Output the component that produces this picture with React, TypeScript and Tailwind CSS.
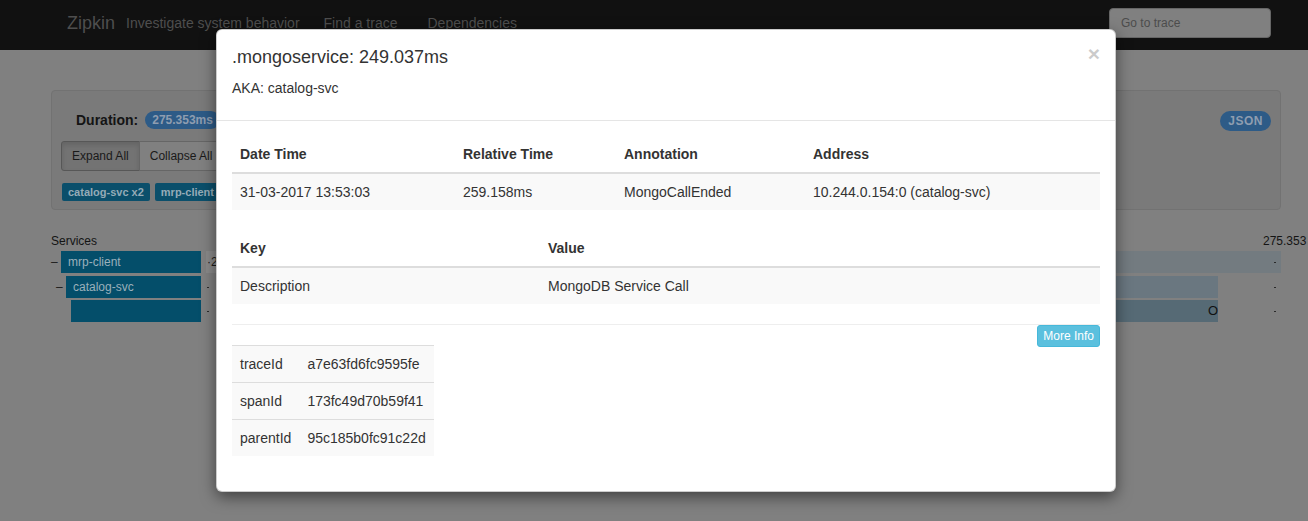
import React from "react";

const font = "font-['Liberation_Sans','Helvetica_Neue',Arial,sans-serif]";

function Dot() {
  return <span className="block w-[2px] h-[1px] bg-[#2a2a2a]" />;
}

function ServiceRow({
  level,
  dash,
  label,
  children,
}: {
  level: number;
  dash: boolean;
  label?: string;
  children: React.ReactNode;
}) {
  const pad = level === 0 ? "pl-0" : level === 1 ? "pl-[5px]" : "pl-[10px]";
  return (
    <div className="flex h-[22px] items-stretch">
      <div className={`flex w-[150px] shrink-0 items-stretch ${pad}`}>
        <span className="w-[10px] text-[12px] leading-[22px] text-[#1a1a1a]">{dash ? "–" : ""}</span>
        <div className="flex-1 bg-[#044e6a] pl-[7px] text-[12px] leading-[22px] text-[#9ab0bb]">{label}</div>
      </div>
      <div className="relative ml-[5px] w-[1075px] shrink-0">{children}</div>
    </div>
  );
}

export default function App() {
  return (
    <div className={`relative h-[521px] w-[1308px] overflow-hidden bg-[#808080] ${font}`}>
      {/* navbar */}
      <div className="flex h-[50px] items-center bg-[#111111] pb-[4px] pl-[67px] text-[#4e4e4e]">
        <span className="text-[18px] leading-[20px]">Zipkin</span>
        <span className="ml-[11px] text-[14px] leading-[20px]">Investigate system behavior</span>
        <span className="ml-[24px] text-[14px] leading-[20px]">Find a trace</span>
        <span className="ml-[30px] text-[14px] leading-[20px]">Dependencies</span>
        <div className="ml-auto mr-[37px] flex h-[30px] w-[162px] items-center rounded-[4px] border border-[#666666] bg-[#808080] pl-[11px] text-[12px] text-[#4c4c4c]">
          Go to trace
        </div>
      </div>

      {/* well */}
      <div className="ml-[51px] mt-[40px] w-[1230px] rounded-[4px] border border-[#727272] bg-[#7a7a7a] pb-[8px] pl-[9px] pr-[9px] pt-[19px]">
        <div className="flex h-[20px] items-center justify-between">
          <div className="ml-[15px] flex items-center">
            <span className="text-[14px] font-bold text-[#141414]">Duration:</span>
            <span className="ml-[7px] rounded-full bg-[#2d5b87] px-[7px] text-[12px] font-bold leading-[18px] text-[#8e9db0]">
              275.353ms
            </span>
          </div>
          <span className="mt-[2px] rounded-full bg-[#2d5b87] px-[8px] text-[12px] font-bold leading-[20px] tracking-[0.5px] text-[#8e9db0]">
            JSON
          </span>
        </div>
        <div className="mt-[11px] flex">
          <div className="rounded-l-[3px] border border-[#575757] bg-[#737373] px-[10px] py-[5px] text-[12px] leading-[18px] text-[#1a1a1a] shadow-[inset_0_3px_5px_rgba(0,0,0,0.125)]">
            Expand All
          </div>
          <div className="-ml-px rounded-r-[3px] border border-[#666666] bg-[#808080] px-[10px] py-[5px] text-[12px] leading-[18px] text-[#1a1a1a]">
            Collapse All
          </div>
        </div>
        <div className="mt-[12px] flex gap-[5px] pl-[1px]">
          <span className="h-[18px] rounded-[2px] bg-[#0b4f6b] px-[6px] text-[11px] font-bold leading-[18px] text-[#95abb7]">
            catalog-svc x2
          </span>
          <span className="h-[18px] rounded-[2px] bg-[#0b4f6b] px-[6px] text-[11px] font-bold leading-[18px] text-[#95abb7]">
            mrp-client x2
          </span>
        </div>
      </div>

      {/* services */}
      <div className="ml-[51px] mt-[25px]">
        <div className="flex h-[12px] items-center text-[12px] leading-[12px] text-[#141414]">
          <span className="w-[1212px] shrink-0">Services</span>
          <span className="shrink-0 whitespace-nowrap">275.353</span>
        </div>
        <div className="mt-[4px] flex flex-col gap-[2.5px]">
          <ServiceRow level={0} dash label="mrp-client">
            <div className="absolute inset-0 bg-[#737b80]" />
            <span className="absolute left-0 top-0 h-full bg-[#8a8a8a] pl-[1px] pr-[4px] text-[12px] leading-[22px] text-[#1a1a1a]">
              ·275.353ms
            </span>
            <div className="absolute right-[5px] top-[11px]">
              <Dot />
            </div>
          </ServiceRow>
          <ServiceRow level={1} dash label="catalog-svc">
            <div className="absolute bottom-0 left-[60px] right-[63px] top-0 bg-[#6a7780]" />
            <div className="absolute left-[1px] top-[11px]">
              <Dot />
            </div>
            <div className="absolute right-[5px] top-[11px]">
              <Dot />
            </div>
          </ServiceRow>
          <ServiceRow level={2} dash={false}>
            <div className="absolute bottom-0 left-[80px] right-[63px] top-0 flex items-center justify-end bg-[#566a75] text-[13px] text-[#111]">
              O
            </div>
            <div className="absolute left-[1px] top-[11px]">
              <Dot />
            </div>
            <div className="absolute right-[5px] top-[11px]">
              <Dot />
            </div>
          </ServiceRow>
        </div>
      </div>

      {/* modal */}
      <div className="absolute left-[216px] top-[29px] w-[900px] rounded-[6px] border border-[rgba(0,0,0,0.2)] bg-white text-[#333333] shadow-[0_5px_15px_rgba(0,0,0,0.5)]">
        <div className="flex justify-between border-b border-[#e5e5e5] p-[15px]">
          <div>
            <h4 className="m-0 text-[18px] leading-[25.7px]">.mongoservice: 249.037ms</h4>
            <p className="my-[7px] text-[14px] leading-[20px]">AKA: catalog-svc</p>
          </div>
          <span className="-mt-[2px] h-[21px] text-[21px] font-bold leading-[21px] text-black opacity-20">×</span>
        </div>
        <div className="p-[15px] text-[14px] leading-[20px]">
          <table className="mb-[20px] w-full table-fixed border-collapse">
            <thead>
              <tr>
                <th className="w-[223px] border-b-2 border-[#dddddd] p-[8px] text-left font-bold">Date Time</th>
                <th className="w-[161px] border-b-2 border-[#dddddd] p-[8px] text-left font-bold">Relative Time</th>
                <th className="w-[189px] border-b-2 border-[#dddddd] p-[8px] text-left font-bold">Annotation</th>
                <th className="border-b-2 border-[#dddddd] p-[8px] text-left font-bold">Address</th>
              </tr>
            </thead>
            <tbody>
              <tr className="bg-[#f9f9f9]">
                <td className="p-[8px]">31-03-2017 13:53:03</td>
                <td className="p-[8px]">259.158ms</td>
                <td className="p-[8px]">MongoCallEnded</td>
                <td className="p-[8px]">10.244.0.154:0 (catalog-svc)</td>
              </tr>
            </tbody>
          </table>
          <table className="mb-[20px] w-full table-fixed border-collapse">
            <thead>
              <tr>
                <th className="w-[308px] border-b-2 border-[#dddddd] p-[8px] text-left font-bold">Key</th>
                <th className="border-b-2 border-[#dddddd] p-[8px] text-left font-bold">Value</th>
              </tr>
            </thead>
            <tbody>
              <tr className="bg-[#f9f9f9]">
                <td className="p-[8px]">Description</td>
                <td className="p-[8px]">MongoDB Service Call</td>
              </tr>
            </tbody>
          </table>
          <div className="border-t border-[#eeeeee]" />
          <div className="flex items-start justify-between">
            <table className="mb-[20px] mt-[20px] border-collapse">
              <tbody>
                {[
                  ["traceId", "a7e63fd6fc9595fe"],
                  ["spanId", "173fc49d70b59f41"],
                  ["parentId", "95c185b0fc91c22d"],
                ].map(([k, v]) => (
                  <tr key={k} className="bg-[#f9f9f9]">
                    <td className="border-t border-[#dddddd] p-[8px]">{k}</td>
                    <td className="border-t border-[#dddddd] p-[8px]">{v}</td>
                  </tr>
                ))}
              </tbody>
            </table>
            <span className="rounded-[3px] border border-[#46b8da] bg-[#5bc0de] px-[5px] py-[1px] text-[12px] leading-[18px] text-white">
              More Info
            </span>
          </div>
        </div>
      </div>
    </div>
  );
}
